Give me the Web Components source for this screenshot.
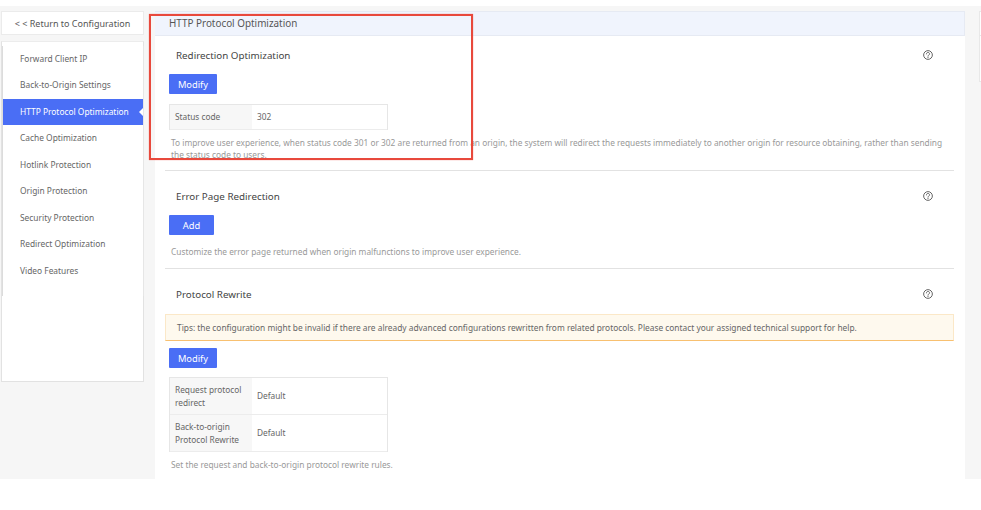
<!DOCTYPE html>
<html>
<head>
<meta charset="utf-8">
<title>HTTP Protocol Optimization</title>
<style>
    html, body { margin: 0; padding: 0; background: #fff; }
    body { font-family: "Noto Sans", "Open Sans", sans-serif; width: 981px; height: 510px; overflow: hidden; }
</style>
</head>
<body>
<cdn-page>
    <cdn-sidenav slot="side" active="HTTP Protocol Optimization"></cdn-sidenav>
    <cdn-panel heading="HTTP Protocol Optimization">
        <cdn-section heading="Redirection Optimization" style="height:135px">
            <cdn-button>Modify</cdn-button>
            <cdn-kv style="margin-top:10px">
                <cdn-row label="Status code" value="302" style="height:24px"></cdn-row>
            </cdn-kv>
            <cdn-note style="margin-top:7px">To improve user experience, when status code 301 or 302 are returned from an origin, the system will redirect the requests immediately to another origin for resource obtaining, rather than sending the status code to users.</cdn-note>
        </cdn-section>
        <cdn-section heading="Error Page Redirection" style="height:98px;padding-top:6px">
            <cdn-button wide>Add</cdn-button>
            <cdn-note style="margin-top:11px">Customize the error page returned when origin malfunctions to improve user experience.</cdn-note>
        </cdn-section>
        <cdn-section heading="Protocol Rewrite" style="padding-top:6px" last>
            <cdn-tip style="margin-top:1px">Tips: the configuration might be invalid if there are already advanced configurations rewritten from related protocols. Please contact your assigned technical support for help.</cdn-tip>
            <cdn-button style="margin-top:7px">Modify</cdn-button>
            <cdn-kv style="margin-top:9px">
                <cdn-row label="Request protocol redirect" value="Default" style="height:36px"></cdn-row>
                <cdn-row label="Back-to-origin Protocol Rewrite" value="Default" style="height:36px"></cdn-row>
            </cdn-kv>
            <cdn-note style="margin-top:7px">Set the request and back-to-origin protocol rewrite rules.</cdn-note>
        </cdn-section>
    </cdn-panel>
</cdn-page>

<script>
// outer shell: grey band with the left column, the panel and the cut-off box on the right
class CdnPage extends HTMLElement {
    constructor() {
        super();
        this.attachShadow({ mode: "open" });
        this.shadowRoot.innerHTML = `
            <style>
                :host { display: block; padding-top: 6px; }
                .band { position: relative; display: flex; height: 468px; padding-top: 5px; background: #f6f6f6; }
                .left { width: 143px; margin-left: 1px; flex: none; }
                .back { height: 22px; line-height: 23px; background: #fff; border: 1px solid #ebebeb;
                    font-size: 9px; color: #555; text-align: center; width: 141px; }
                .main { margin-left: 11px; width: 810px; flex: none; }
                .stub { margin-left: 14px; flex: 1; height: 69px; background: #fff; border: 1px solid #e8e8e8; border-right: 0; position: relative; }
                .stub::after { content: ""; position: absolute; left: 0; right: 0; top: 23px; border-top: 1px solid #e8e8e8; }
                .mark { position: absolute; left: 149px; top: 8px; width: 324px; height: 146px; box-sizing: border-box;
                    border: 2px solid #e8493c; box-shadow: 0 0 0.8px #e8493c; pointer-events: none; }
            </style>
            <div class="band">
                <div class="left">
                    <div class="back">&lt; &lt; Return to Configuration</div>
                    <slot name="side"></slot>
                </div>
                <div class="main"><slot></slot></div>
                <div class="stub"></div>
                <div class="mark"></div>
            </div>`;
    }
}

class CdnSidenav extends HTMLElement {
    constructor() {
        super();
        this.attachShadow({ mode: "open" });
        const items = ["Forward Client IP", "Back-to-Origin Settings", "HTTP Protocol Optimization", "Cache Optimization",
            "Hotlink Protection", "Origin Protection", "Security Protection", "Redirect Optimization", "Video Features"];
        const active = this.getAttribute("active");
        this.shadowRoot.innerHTML = `
            <style>
                :host { display: block; margin-top: 6px; height: 341px; box-sizing: border-box; background: #fff;
                    border: 1px solid #e2e2e2; border-top-color: #ececec; padding-top: 4px; }
                /* the list sits one pixel to the right of its box, as in the product */
                .list { margin: 0 -1px 0 0; padding-bottom: 12px; border-left: 1px solid #dcdcdc; border-right: 1px solid #e6e6e6; }
                .item { height: 26.45px; line-height: 26.45px; padding-left: 17px; font-size: 8.4px; color: #666; position: relative; }
                .on { background: #4a6ef5; color: #fff; }
                .on::after { content: ""; position: absolute; right: 0; top: 9px; border: 4px solid transparent; border-right-color: #fff; border-left-width: 0; }
            </style>
            <div class="list">
                ${items.map(i => `<div class="item ${i === active ? "on" : ""}">${i}</div>`).join("")}
            </div>`;
    }
}

class CdnPanel extends HTMLElement {
    constructor() {
        super();
        this.attachShadow({ mode: "open" });
        this.shadowRoot.innerHTML = `
            <style>
                :host { display: block; height: 468px; background: #fff; overflow: hidden; }
                .head { height: 23px; line-height: 23px; padding-left: 14px; background: #f0f4fd; border: 1px solid #e6eaf3; border-width: 1px 1px 1px 0;
                    font-size: 9.9px; color: #555; }
                .body { padding: 0 11px 0 10px; }
            </style>
            <div class="head">${this.getAttribute("heading")}</div>
            <div class="body"><slot></slot></div>`;
    }
}

class CdnSection extends HTMLElement {
    constructor() {
        super();
        this.attachShadow({ mode: "open" });
        const line = this.hasAttribute("last") ? "none" : "1px solid #e2e2e2";
        this.shadowRoot.innerHTML = `
            <style>
                :host { display: block; box-sizing: border-box; border-bottom: ${line}; }
                .title { display: flex; justify-content: space-between; align-items: center; height: 38px; padding: 0 21px 0 11px;
                    font-size: 9.8px; color: #444; }
                svg { display: block; width: 10px; height: 10px; margin-top: -1px; }
                .inner { padding-left: 4px; }
            </style>
            <div class="title">
                <span>${this.getAttribute("heading")}</span>
                <svg viewBox="0 0 22 22" fill="none" stroke="#555" stroke-width="2">
                    <circle cx="11" cy="11" r="9.6"/>
                    <path d="M7.6 8.6c0-2 1.5-3.2 3.4-3.2s3.4 1.2 3.4 3c0 2.6-3.4 2.6-3.4 5.2" stroke-linecap="round"/>
                    <circle cx="11" cy="16.6" r="0.7" fill="#555" stroke-width="1"/>
                </svg>
            </div>
            <div class="inner"><slot></slot></div>`;
    }
}

class CdnButton extends HTMLElement {
    constructor() {
        super();
        this.attachShadow({ mode: "open" });
        const w = this.hasAttribute("wide") ? 45 : 48;
        this.shadowRoot.innerHTML = `
            <style>
                :host { display: block; width: ${w}px; height: 20px; line-height: 21px; text-align: center; background: #4a6ef5;
                    border-radius: 1px; color: #fff; font-size: 9.3px; }
            </style>
            <slot></slot>`;
    }
}

class CdnKv extends HTMLElement {
    constructor() {
        super();
        this.attachShadow({ mode: "open" });
        this.shadowRoot.innerHTML = `
            <style>
                :host { display: block; width: 219px; box-sizing: border-box; border: 1px solid #e6e6e6; border-bottom-width: 0; }
            </style>
            <slot></slot>`;
    }
}

class CdnRow extends HTMLElement {
    constructor() {
        super();
        this.attachShadow({ mode: "open" });
        this.shadowRoot.innerHTML = `
            <style>
                :host { display: flex; border-bottom: 1px solid #ececec; font-size: 8.3px; color: #666; line-height: 12.4px; }
                .k { width: 82px; flex: none; box-sizing: border-box; padding: 1px 5px 0; background: #f7f7f7; display: flex; align-items: center; }
                .v { flex: 1; padding: 1px 0 0 5px; display: flex; align-items: center; }
            </style>
            <div class="k">${this.getAttribute("label")}</div>
            <div class="v">${this.getAttribute("value")}</div>`;
    }
}

class CdnNote extends HTMLElement {
    constructor() {
        super();
        this.attachShadow({ mode: "open" });
        this.shadowRoot.innerHTML = `
            <style>
                :host { display: block; font-size: 8.33px; line-height: 12px; color: #999; padding-left: 2px; padding-right: 8px; }
            </style>
            <slot></slot>`;
    }
}

class CdnTip extends HTMLElement {
    constructor() {
        super();
        this.attachShadow({ mode: "open" });
        this.shadowRoot.innerHTML = `
            <style>
                :host { display: block; margin-left: -4px; height: 27px; line-height: 26px; box-sizing: border-box; padding-left: 11px;
                    background: #fef9ee; border: 1px solid #fbe8c8; border-bottom-color: #f8c070; font-size: 8.35px; color: #666; }
            </style>
            <slot></slot>`;
    }
}

customElements.define("cdn-page", CdnPage);
customElements.define("cdn-sidenav", CdnSidenav);
customElements.define("cdn-panel", CdnPanel);
customElements.define("cdn-section", CdnSection);
customElements.define("cdn-button", CdnButton);
customElements.define("cdn-kv", CdnKv);
customElements.define("cdn-row", CdnRow);
customElements.define("cdn-note", CdnNote);
customElements.define("cdn-tip", CdnTip);
</script>
</body>
</html>
